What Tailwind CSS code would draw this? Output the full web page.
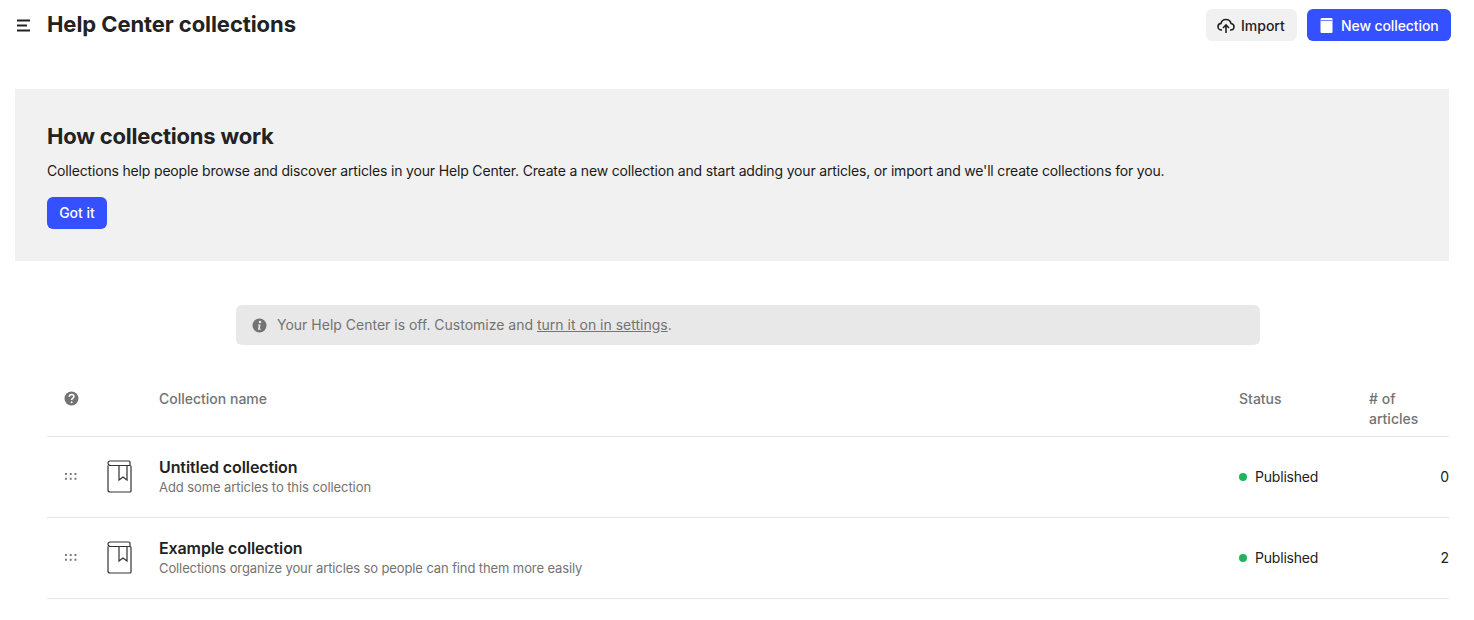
<!DOCTYPE html>
<html lang="en">

<head>
    <meta charset="UTF-8" />
    <meta name="viewport" content="width=device-width, initial-scale=1.0" />
    <title>Help Center collections</title>
    <script src="https://cdn.jsdelivr.net/npm/@tailwindcss/browser@4"></script>
</head>

<body class="bg-white h-[620px] overflow-hidden font-['Inter',sans-serif] text-[#222]">
    <!-- header -->
    <header class="flex items-start justify-between pl-[16px] pr-[23px] pt-[9px] h-[89px]">
        <div class="flex items-center h-[32px]">
            <svg width="15" height="13" viewBox="0 0 15 13" class="mr-[16px]">
                <path d="M1 1.500h13M1 6.500h10M1 11.500h13" stroke="#222" stroke-width="2" />
            </svg>
            <h1 class="text-[22px] font-bold tracking-[-0.08px] pb-[2px]">Help Center collections</h1>
        </div>
        <div class="flex gap-[10px]">
            <button class="flex items-center h-[32px] w-[91px] pl-[11px] bg-[#f1f1f1] rounded-[6px] text-[14px] font-medium">
                <svg width="18" height="16" viewBox="0 0 18 16" fill="none" stroke="#222" stroke-width="1.600" class="mr-[6px] mt-[2px]">
                    <path d="M5 12H4.500C2.500 12 1 10.500 1 8.700 1 7 2.300 5.600 4 5.400 4.500 3.100 6.500 1.500 9 1.500c2.500 0 4.500 1.700 5 4 1.700.2 3 1.500 3 3.200 0 1.800-1.500 3.300-3.500 3.300H13" />
                    <path d="M9 15V7.500M6 10l3-3 3 3" />
                </svg>
                Import
            </button>
            <button class="flex items-center h-[32px] w-[144px] pl-[13px] bg-[#3450ff] rounded-[6px] text-white text-[14px] font-medium tracking-[-0.1px]">
                <svg width="13" height="15" viewBox="0 0 13 15" class="mr-[8px]">
                    <path d="M2 0h9.500a1 1 0 0 1 1 1v13a1 1 0 0 1-1 1H1.500a1 1 0 0 1-1-1V1.800A1.800 1.800 0 0 1 2 0z" fill="#fff" />
                    <path d="M.5 2.500h12" stroke="#3450ff" stroke-width=".7" />
                </svg>
                New collection
            </button>
        </div>
    </header>

    <!-- how collections work -->
    <section class="ml-[15px] mr-[25px] h-[172px] bg-[#f1f1f1] pl-[32px] pt-[34px]">
        <h2 class="text-[22px] leading-[27px] font-bold tracking-[-0.2px]">How collections work</h2>
        <p class="mt-[10px] text-[14px] leading-[22px] tracking-[-0.17px] text-[#1a1a1a]">Collections help people browse and discover articles in your Help Center. Create a new collection and start adding your articles, or import and we'll create collections for you.</p>
        <button class="mt-[15px] h-[32px] w-[60px] pb-[2px] bg-[#3450ff] rounded-[6px] text-white text-[14px] font-medium">Got it</button>
    </section>

    <!-- notice -->
    <div class="ml-[236px] mt-[44px] w-[1024px] h-[40px] flex items-center pl-[16px] bg-[#e8e8e8] rounded-[6px] text-[14px] text-[#737373]">
        <svg width="15" height="15" viewBox="0 0 15 15" class="mr-[10px]">
            <circle cx="7.500" cy="7.500" r="7" fill="#737373" />
            <circle cx="8" cy="4" r="1.300" fill="#e8e8e8" />
            <path d="M6 6.500h2.600L7.800 10.800h1v1H5.900l.8-4.300H6z" fill="#e8e8e8" />
        </svg>
        <span class="pb-[2px]">Your Help Center is off. Customize and <span class="underline">turn it on in settings</span>.</span>
    </div>

    <!-- table -->
    <div class="ml-[47px] mr-[25px] mt-[27px]">
        <div class="flex h-[65px] pt-[17px] border-b border-[#e5e5e5] text-[14px] leading-[20px] font-medium text-[#737373]">
            <div class="w-[112px] pl-[17px] pt-[2px]">
                <svg width="15" height="15" viewBox="0 0 15 15">
                    <circle cx="7.500" cy="7.500" r="7" fill="#737373" />
                    <path d="M5.200 5.800C5.300 4.500 6.200 3.600 7.600 3.600c1.400 0 2.300.8 2.300 2 0 1.900-2.300 1.700-2.300 3.500" fill="none" stroke="#fff" stroke-width="1.500" />
                    <circle cx="7.600" cy="11.200" r="1" fill="#fff" />
                </svg>
            </div>
            <div class="flex-1">Collection name</div>
            <div class="w-[130px]">Status</div>
            <div class="w-[80px]"># of<br />articles</div>
        </div>

        <div class="flex items-center h-[81px] border-b border-[#e5e5e5]">
            <div class="w-[60px] pl-[18px]">
                <svg width="13" height="8" viewBox="0 0 13 8" fill="#777">
                    <path d="M0 0h2v2H0zM5 0h2v2H5zM10 0h2v2h-2zM0 5h2v2H0zM5 5h2v2H5zM10 5h2v2h-2z" transform="scale(.95)" />
                </svg>
            </div>
            <div class="w-[52px] pb-[2px]">
                <svg width="25" height="33" viewBox="0 0 25 33" fill="none" stroke="#333" stroke-width="1.200">
                    <path d="M1 5.500V30a2 2 0 0 0 2 2h20a1 1 0 0 0 1-1V6.500a1 1 0 0 0-1-1H3.500A2.500 2.500 0 0 1 1 3a2 2 0 0 1 2-2h19a1 1 0 0 1 1 1v3.500" />
                    <path d="M12 5.500V20l4-3 4 3V5.500" />
                </svg>
            </div>
            <div class="flex-1">
                <div class="text-[16px] leading-[20px] font-semibold tracking-[-0.1px]">Untitled collection</div>
                <div class="text-[13px] leading-[20px] tracking-[-0.08px] text-[#737373]">Add some articles to this collection</div>
            </div>
            <div class="w-[130px] flex items-center text-[14px] tracking-[-0.2px]">
                <span class="w-[8px] h-[8px] rounded-full bg-[#1fb45c] mr-[8px]"></span><span class="pb-[2px]">Published</span>
            </div>
            <div class="w-[80px] text-right text-[14px] pb-[2px]">0</div>
        </div>

        <div class="flex items-center h-[81px] border-b border-[#e5e5e5]">
            <div class="w-[60px] pl-[18px]">
                <svg width="13" height="8" viewBox="0 0 13 8" fill="#777">
                    <path d="M0 0h2v2H0zM5 0h2v2H5zM10 0h2v2h-2zM0 5h2v2H0zM5 5h2v2H5zM10 5h2v2h-2z" transform="scale(.95)" />
                </svg>
            </div>
            <div class="w-[52px] pb-[2px]">
                <svg width="25" height="33" viewBox="0 0 25 33" fill="none" stroke="#333" stroke-width="1.200">
                    <path d="M1 5.500V30a2 2 0 0 0 2 2h20a1 1 0 0 0 1-1V6.500a1 1 0 0 0-1-1H3.500A2.500 2.500 0 0 1 1 3a2 2 0 0 1 2-2h19a1 1 0 0 1 1 1v3.500" />
                    <path d="M12 5.500V20l4-3 4 3V5.500" />
                </svg>
            </div>
            <div class="flex-1">
                <div class="text-[16px] leading-[20px] font-semibold tracking-[-0.12px]">Example collection</div>
                <div class="text-[13px] leading-[20px] tracking-[-0.11px] text-[#737373]">Collections organize your articles so people can find them more easily</div>
            </div>
            <div class="w-[130px] flex items-center text-[14px] tracking-[-0.2px]">
                <span class="w-[8px] h-[8px] rounded-full bg-[#1fb45c] mr-[8px]"></span><span class="pb-[2px]">Published</span>
            </div>
            <div class="w-[80px] text-right text-[14px] pb-[2px]">2</div>
        </div>
    </div>
</body>

</html>
